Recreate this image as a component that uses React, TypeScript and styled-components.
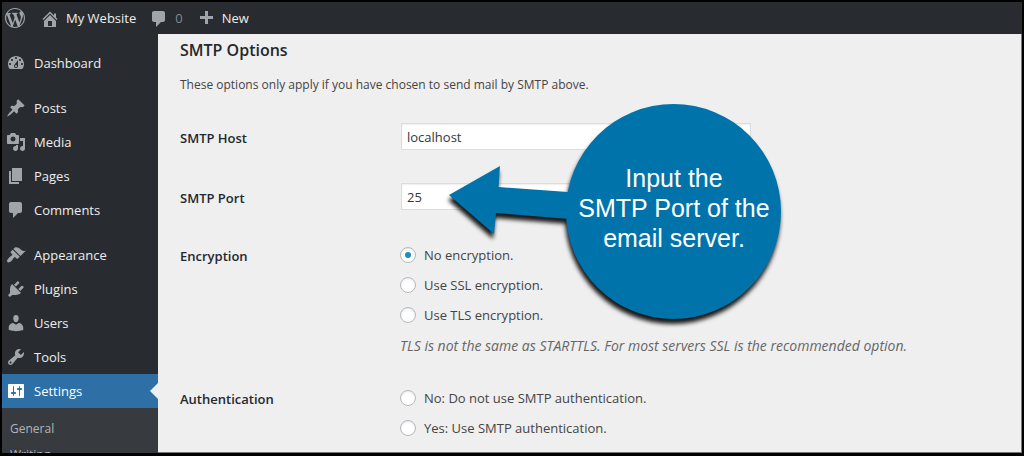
import React from "react";
import styled, { createGlobalStyle } from "styled-components";

const GlobalStyle = createGlobalStyle`
  * { box-sizing: border-box; }
  body {
    margin: 0;
    background: #000;
    color: #444;
    font: 13px/20px "Segoe UI", "Open Sans", "Noto Sans", sans-serif;
  }
`;

const icons = {
  wordpress:
    "M20 10c0-5.51-4.49-10-10-10C4.48 0 0 4.49 0 10c0 5.52 4.48 10 10 10 5.51 0 10-4.48 10-10zM7.78 15.37L4.37 6.22c.55-.02 1.17-.08 1.17-.08.5-.06.44-1.13-.06-1.11 0 0-1.45.11-2.37.11-.18 0-.37 0-.58-.01C4.12 2.69 6.87 1.11 10 1.11c2.33 0 4.45.87 6.05 2.34-.68-.11-1.65.39-1.65 1.58 0 .74.45 1.36.9 2.1.35.61.55 1.36.55 2.46 0 1.49-1.4 5-1.4 5l-3.03-8.37c.54-.02.82-.17.82-.17.5-.05.44-1.25-.06-1.22 0 0-1.44.12-2.38.12-.87 0-2.33-.12-2.33-.12-.5-.03-.56 1.2-.06 1.22l.92.08 1.26 3.41zM17.41 10c.24-.64.74-1.87.43-4.25.7 1.29 1.05 2.71 1.05 4.25 0 3.29-1.73 6.24-4.4 7.78.97-2.59 1.94-5.2 2.92-7.78zM6.1 18.09C3.12 16.65 1.11 13.53 1.11 10c0-1.3.23-2.48.72-3.59C3.25 10.3 4.67 14.2 6.1 18.09zm4.03-6.63l2.58 6.98c-.86.29-1.76.45-2.71.45-.79 0-1.57-.11-2.29-.33.81-2.38 1.62-4.74 2.42-7.1z",
  home: "M16 8.5l1.53 1.53-1.06 1.06L10 4.6l-6.47 6.49-1.06-1.06L10 2.5l4 4v-2h2v4zm-6-2.46l6 5.99V18H4v-5.97zM12 17v-5H8v5h4z",
  comments:
    "M5 2h9c1.1 0 2 .9 2 2v7c0 1.1-.9 2-2 2h-2l-5 5v-5H5c-1.1 0-2-.9-2-2V4c0-1.1.9-2 2-2z",
  plus: "M17 7v3h-5v5H9v-5H4V7h5V2h3v5h5z",
  dashboard:
    "M3.76 16h12.48c1.1-1.37 1.76-3.11 1.76-5 0-4.42-3.58-8-8-8s-8 3.58-8 8c0 1.89.66 3.63 1.76 5zM10 4c.55 0 1 .45 1 1s-.45 1-1 1-1-.45-1-1 .45-1 1-1zM6 6c.55 0 1 .45 1 1s-.45 1-1 1-1-.45-1-1 .45-1 1-1zm8 0c.55 0 1 .45 1 1s-.45 1-1 1-1-.45-1-1 .45-1 1-1zm-5.37 5.55L12 7v6c0 1.1-.9 2-2 2s-2-.9-2-2c0-.57.24-1.08.63-1.45zM4 10c.55 0 1 .45 1 1s-.45 1-1 1-1-.45-1-1 .45-1 1-1zm12 0c.55 0 1 .45 1 1s-.45 1-1 1-1-.45-1-1 .45-1 1-1zm-5 3c0-.55-.45-1-1-1s-1 .45-1 1 .45 1 1 1 1-.45 1-1z",
  posts:
    "M10.44 3.02l1.82-1.82 6.36 6.35-1.83 1.82c-1.05-.68-2.48-.57-3.41.36l-.75.75c-.92.93-1.04 2.35-.35 3.41l-1.83 1.82-2.41-2.41-2.8 2.79c-.42.42-3.38 2.71-3.8 2.29s1.86-3.39 2.28-3.81l2.79-2.79L4.1 9.36l1.83-1.82c1.05.69 2.48.57 3.4-.36l.75-.75c.93-.92 1.05-2.35.36-3.41z",
  media:
    "M13 11V4c0-.55-.45-1-1-1h-1.67L9 1H5L3.67 3H2c-.55 0-1 .45-1 1v7c0 .55.45 1 1 1h10c.55 0 1-.45 1-1zM7 4.5c1.38 0 2.5 1.12 2.5 2.5S8.38 9.5 7 9.5 4.5 8.38 4.5 7 5.62 4.5 7 4.5zM14 6h5v10.5c0 1.38-1.12 2.5-2.5 2.5S14 17.88 14 16.5s1.12-2.5 2.5-2.5c.17 0 .34.02.5.05V9h-3V6zm-4 8.05V13h2v3.5c0 1.38-1.12 2.5-2.5 2.5S7 17.88 7 16.5 8.12 14 9.5 14c.17 0 .34.02.5.05z",
  pages: "M6 15V2h10v13H6zm-1 1h8v2H3V5h2v11z",
  appearance:
    "M14.48 11.06L7.41 3.99l1.5-1.5c.5-.56 2.3-.47 3.51.32 1.21.8 1.43 1.28 2.91 2.1 1.18.64 2.45 1.26 4.45.85zm-.71.71L6.7 4.7 4.93 6.47c-.39.39-.39 1.02 0 1.41l1.06 1.06c.39.39.39 1.03 0 1.42-.6.6-1.43 1.11-2.21 1.69-.35.26-.7.53-1.01.84C1.43 14.23.4 16.08 1.4 17.07c.99 1 2.84-.03 4.18-1.36.31-.31.58-.66.85-1.02.57-.78 1.08-1.61 1.69-2.21.39-.39 1.02-.39 1.41 0l1.06 1.06c.39.39 1.02.39 1.41 0z",
  plugins:
    "M13.11 4.36L9.87 7.6 8 5.73l3.24-3.24c.35-.34 1.05-.2 1.56.32.52.51.66 1.21.31 1.55zm-8 1.77l.91-1.12 9.01 9.01-1.19.84c-.71.71-2.63 1.16-3.82 1.16H6.14L4.9 17.26c-.59.59-1.54.59-2.12 0-.59-.58-.59-1.53 0-2.12l1.24-1.24v-3.88c0-1.13.4-3.19 1.09-3.89zm7.26 3.97l3.24-3.24c.34-.35 1.04-.21 1.55.31.52.51.66 1.21.31 1.55l-3.24 3.25z",
  users:
    "M10 9.25c-2.27 0-2.73-3.44-2.73-3.44C7 4.02 7.82 2 9.97 2c2.16 0 2.98 2.02 2.71 3.81 0 0-.41 3.44-2.68 3.44zm0 2.57L12.72 10c2.39 0 4.52 2.33 4.52 4.53v2.49s-3.65 1.13-7.24 1.13c-3.65 0-7.24-1.13-7.24-1.13v-2.49c0-2.25 1.94-4.48 4.47-4.48z",
  tools:
    "M16.68 9.77c-1.34 1.34-3.3 1.67-4.95.99l-5.41 6.52c-.99.99-2.59.99-3.58 0s-.99-2.59 0-3.57l6.52-5.42c-.68-1.65-.35-3.61.99-4.95 1.28-1.28 3.12-1.62 4.72-1.06l-2.89 2.89 2.82 2.82 2.86-2.87c.53 1.58.18 3.39-1.08 4.65zM3.81 16.21c.4.39 1.04.39 1.43 0 .4-.4.4-1.04 0-1.43-.39-.4-1.03-.4-1.43 0-.39.39-.39 1.03 0 1.43z",
  settings:
    "M18 16V4c0-.55-.45-1-1-1H3c-.55 0-1 .45-1 1v12c0 .55.45 1 1 1h14c.55 0 1-.45 1-1zM8 11h1c.55 0 1 .45 1 1s-.45 1-1 1H8v1.5c0 .28-.22.5-.5.5s-.5-.22-.5-.5V13H6c-.55 0-1-.45-1-1s.45-1 1-1h1V5.5c0-.28.22-.5.5-.5s.5.22.5.5V11zm5-2h-1c-.55 0-1-.45-1-1s.45-1 1-1h1V5.5c0-.28.22-.5.5-.5s.5.22.5.5V7h1c.55 0 1 .45 1 1s-.45 1-1 1h-1v5.5c0 .28-.22.5-.5.5s-.5-.22-.5-.5V9z",
};

type IconName = keyof typeof icons;

const IconSvg = styled.svg`
  flex: none;
  width: 20px;
  height: 20px;
  fill: currentColor;
`;

const Icon = ({ name }: { name: IconName }) => (
  <IconSvg viewBox="0 0 20 20" aria-hidden="true">
    <path fillRule="evenodd" d={icons[name]} />
  </IconSvg>
);

const Frame = styled.div`
  position: relative;
  display: flex;
  flex-direction: column;
  height: 100vh;
  overflow: hidden;
  border: 2px solid #000;
  border-bottom-width: 3px;
  background: #efefef;
`;

const Toolbar = styled.header`
  display: flex;
  align-items: center;
  flex: none;
  height: 32px;
  padding-left: 3px;
  gap: 13px;
  background: #282c30;
`;

const LogoLink = styled.a`
  display: flex;
  margin-right: 2px;
  color: #a0a5aa;
`;

const ToolbarLink = styled.a<{ $dim?: boolean }>`
  display: flex;
  align-items: center;
  gap: 6px;
  color: ${(p) => (p.$dim ? "#84888c" : "#eee")};
  text-decoration: none;

  svg {
    margin-top: 2px;
    color: #a0a5aa;
  }
`;

const Body = styled.div`
  display: flex;
  flex: 1;
  min-height: 0;
`;

const Sidebar = styled.nav`
  display: flex;
  flex-direction: column;
  flex: none;
  width: 156px;
  padding-top: 12px;
  background: #282c30;
`;

const MenuGroup = styled.div`
  flex: none;
  margin-bottom: 11px;
`;

const MenuLink = styled.a<{ $current?: boolean }>`
  position: relative;
  display: flex;
  align-items: center;
  gap: 8px;
  height: 34px;
  padding-left: 4px;
  background: ${(p) => (p.$current ? "#2e70a6" : "transparent")};
  color: ${(p) => (p.$current ? "#fff" : "#eee")};
  text-decoration: none;

  svg {
    color: ${(p) => (p.$current ? "#fff" : "#a0a5aa")};
  }

  &::after {
    content: "";
    display: ${(p) => (p.$current ? "block" : "none")};
    position: absolute;
    right: 0;
    top: 9px;
    border: 8px solid transparent;
    border-left-width: 0;
    border-right-color: #efefef;
  }
`;

const Submenu = styled.div`
  display: flex;
  flex-direction: column;
  padding: 8px;
  background: #373b40;
`;

const SubmenuLink = styled.a`
  font-size: 12px;
  line-height: 26px;
  color: #b0b4b8;
  text-decoration: none;
`;

const Content = styled.main`
  flex: 1;
  min-width: 0;
  padding: 6px 22px 0;
  border: solid #777;
  border-width: 0 1px 1px 0;
  overflow: hidden;
`;

const Heading = styled.h2`
  margin: 0;
  font-size: 16px;
  font-weight: 600;
  line-height: 20px;
  color: #23282d;
`;

const Intro = styled.p`
  margin: 15px 0 11px;
  font-size: 12px;
`;

const FormRow = styled.div`
  display: grid;
  grid-template-columns: 220px 1fr;
`;

const FieldLabel = styled.label`
  padding-top: 22px;
  font-weight: 600;
  color: #23282d;
`;

const GroupLabel = styled.span`
  padding-top: 20px;
  font-weight: 600;
  color: #23282d;
`;

const Field = styled.div`
  padding: 14px 0;
`;

const TextInput = styled.input`
  display: block;
  width: 350px;
  max-width: 100%;
  height: 27px;
  margin: 3px 1px 2px;
  padding: 3px 5px;
  border: 1px solid #ddd;
  background: #fff;
  box-shadow: inset 0 1px 2px rgba(0, 0, 0, 0.07);
  font: inherit;
  color: #32373c;
`;

const Option = styled.label`
  display: flex;
  align-items: center;
  gap: 8px;
  height: 30px;
`;

const Radio = styled.input`
  appearance: none;
  display: grid;
  place-items: center;
  width: 16px;
  height: 16px;
  margin: 0;
  border: 1px solid #b4b9be;
  border-radius: 50%;
  background: #fff;
  box-shadow: inset 0 1px 2px rgba(0, 0, 0, 0.1);

  &:checked::before {
    content: "";
    width: 6px;
    height: 6px;
    border-radius: 50%;
    background: #1e8cbe;
  }
`;

const Description = styled.p`
  margin: 7px 0 0;
  font-size: 14px;
  font-style: italic;
  line-height: 18px;
  color: #666;
`;

const Callout = styled.aside`
  position: absolute;
  left: 438px;
  top: 94px;
  width: 350px;
  height: 240px;
  pointer-events: none;
`;

const CalloutShape = styled.svg`
  display: block;
  width: 100%;
  height: 100%;
  fill: #0073aa;
  filter: drop-shadow(-1px 5px 2px rgba(0, 0, 0, 0.9));
`;

const CalloutText = styled.p`
  position: absolute;
  right: 10px;
  top: 67px;
  width: 212px;
  margin: 0;
  font: 25px/30px "Liberation Sans", Arial, sans-serif;
  text-align: center;
  color: #fff;
`;

const menu: { name: IconName; label: string }[][] = [
  [{ name: "dashboard", label: "Dashboard" }],
  [
    { name: "posts", label: "Posts" },
    { name: "media", label: "Media" },
    { name: "pages", label: "Pages" },
    { name: "comments", label: "Comments" },
  ],
  [
    { name: "appearance", label: "Appearance" },
    { name: "plugins", label: "Plugins" },
    { name: "users", label: "Users" },
    { name: "tools", label: "Tools" },
    { name: "settings", label: "Settings" },
  ],
];

const RadioOption = ({ name, label, checked }: { name: string; label: string; checked?: boolean }) => (
  <Option>
    <Radio type="radio" name={name} defaultChecked={checked} />
    {label}
  </Option>
);

export default function App() {
  return (
    <>
      <GlobalStyle />
      <Frame>
        <Toolbar>
          <LogoLink href="#" aria-label="About WordPress">
            <Icon name="wordpress" />
          </LogoLink>
          <ToolbarLink href="#">
            <Icon name="home" />
            My Website
          </ToolbarLink>
          <ToolbarLink href="#" $dim>
            <Icon name="comments" />0
          </ToolbarLink>
          <ToolbarLink href="#">
            <Icon name="plus" />
            New
          </ToolbarLink>
        </Toolbar>
        <Body>
          <Sidebar aria-label="Main menu">
            {menu.map((group) => (
              <MenuGroup key={group[0].name}>
                {group.map(({ name, label }) => (
                  <MenuLink key={name} href="#" $current={name === "settings"}>
                    <Icon name={name} />
                    {label}
                  </MenuLink>
                ))}
                {group.some(({ name }) => name === "settings") && (
                  <Submenu>
                    <SubmenuLink href="#">General</SubmenuLink>
                    <SubmenuLink href="#">Writing</SubmenuLink>
                  </Submenu>
                )}
              </MenuGroup>
            ))}
          </Sidebar>
          <Content>
            <Heading>SMTP Options</Heading>
            <Intro>These options only apply if you have chosen to send mail by SMTP above.</Intro>
            <FormRow>
              <FieldLabel htmlFor="host">SMTP Host</FieldLabel>
              <Field>
                <TextInput id="host" type="text" defaultValue="localhost" />
              </Field>
            </FormRow>
            <FormRow>
              <FieldLabel htmlFor="port">SMTP Port</FieldLabel>
              <Field>
                <TextInput id="port" type="text" defaultValue="25" />
              </Field>
            </FormRow>
            <FormRow role="radiogroup" aria-labelledby="encryption">
              <GroupLabel id="encryption">Encryption</GroupLabel>
              <Field>
                <RadioOption name="encryption" label="No encryption." checked />
                <RadioOption name="encryption" label="Use SSL encryption." />
                <RadioOption name="encryption" label="Use TLS encryption." />
                <Description>
                  TLS is not the same as STARTTLS. For most servers SSL is the recommended option.
                </Description>
              </Field>
            </FormRow>
            <FormRow role="radiogroup" aria-labelledby="authentication">
              <GroupLabel id="authentication">Authentication</GroupLabel>
              <Field>
                <RadioOption name="authentication" label="No: Do not use SMTP authentication." />
                <RadioOption name="authentication" label="Yes: Use SMTP authentication." />
              </Field>
            </FormRow>
          </Content>
        </Body>
        <Callout>
          <CalloutShape viewBox="440 96 350 240" aria-hidden="true">
            <circle cx="673.5" cy="211.5" r="107.5" />
            <path d="M449 195L500 166L498.500 187L575 192.500V219.500L496 213L494 234Z" />
          </CalloutShape>
          <CalloutText>
            Input the
            <br />
            SMTP Port of the
            <br />
            email server.
          </CalloutText>
        </Callout>
      </Frame>
    </>
  );
}
